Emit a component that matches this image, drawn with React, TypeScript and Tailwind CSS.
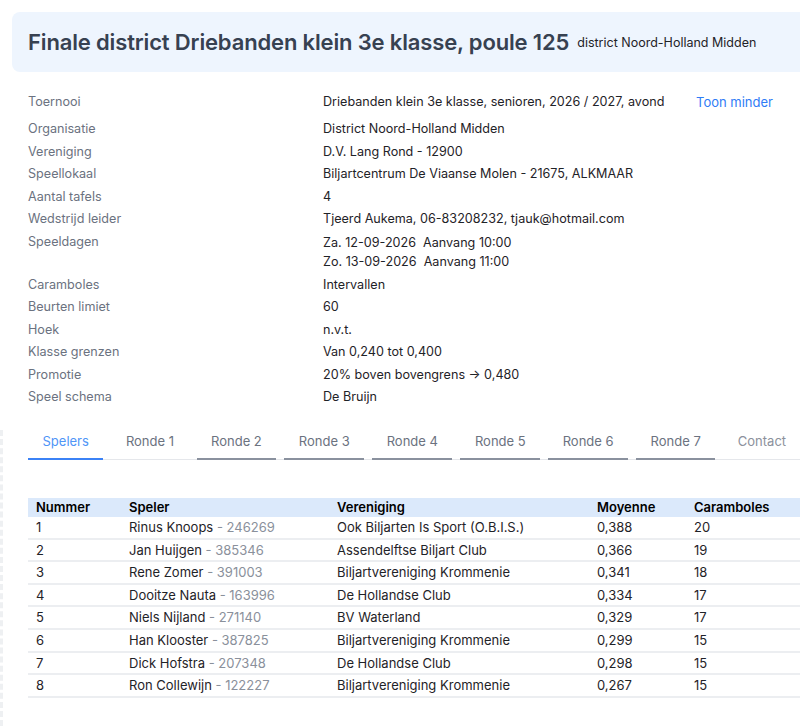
const INFO: { label: string; value: string[] }[] = [
  { label: "Organisatie", value: ["District Noord-Holland Midden"] },
  { label: "Vereniging", value: ["D.V. Lang Rond - 12900"] },
  { label: "Speellokaal", value: ["Biljartcentrum De Viaanse Molen - 21675, ALKMAAR"] },
  { label: "Aantal tafels", value: ["4"] },
  { label: "Wedstrijd leider", value: ["Tjeerd Aukema, 06-83208232, tjauk@hotmail.com"] },
  { label: "Speeldagen", value: ["Za. 12-09-2026\u00a0\u00a0Aanvang 10:00", "Zo. 13-09-2026\u00a0\u00a0Aanvang 11:00"] },
  { label: "Caramboles", value: ["Intervallen"] },
  { label: "Beurten limiet", value: ["60"] },
  { label: "Hoek", value: ["n.v.t."] },
  { label: "Klasse grenzen", value: ["Van 0,240 tot 0,400"] },
  { label: "Promotie", value: ["20% boven bovengrens \u2192 0,480"] },
  { label: "Speel schema", value: ["De Bruijn"] },
];

type Tab = { label: string; kind: "active" | "plain" | "underlined" | "muted" };

const TABS: Tab[] = [
  { label: "Spelers", kind: "active" },
  { label: "Ronde 1", kind: "plain" },
  { label: "Ronde 2", kind: "underlined" },
  { label: "Ronde 3", kind: "underlined" },
  { label: "Ronde 4", kind: "underlined" },
  { label: "Ronde 5", kind: "underlined" },
  { label: "Ronde 6", kind: "underlined" },
  { label: "Ronde 7", kind: "underlined" },
  { label: "Contact", kind: "muted" },
];

const TAB_STYLES: Record<Tab["kind"], string> = {
  active: "border-[#3b82f6] text-[#4f95f7]",
  plain: "border-transparent text-[#6b7280]",
  underlined: "border-[#8a919e] text-[#6b7280]",
  muted: "border-transparent text-[#8b919c]",
};

const PLAYERS = [
  { nr: 1, name: "Rinus Knoops", id: "246269", club: "Ook Biljarten Is Sport (O.B.I.S.)", moy: "0,388", car: 20 },
  { nr: 2, name: "Jan Huijgen", id: "385346", club: "Assendelftse Biljart Club", moy: "0,366", car: 19 },
  { nr: 3, name: "Rene Zomer", id: "391003", club: "Biljartvereniging Krommenie", moy: "0,341", car: 18 },
  { nr: 4, name: "Dooitze Nauta", id: "163996", club: "De Hollandse Club", moy: "0,334", car: 17 },
  { nr: 5, name: "Niels Nijland", id: "271140", club: "BV Waterland", moy: "0,329", car: 17 },
  { nr: 6, name: "Han Klooster", id: "387825", club: "Biljartvereniging Krommenie", moy: "0,299", car: 15 },
  { nr: 7, name: "Dick Hofstra", id: "207348", club: "De Hollandse Club", moy: "0,298", car: 15 },
  { nr: 8, name: "Ron Collewijn", id: "122227", club: "Biljartvereniging Krommenie", moy: "0,267", car: 15 },
];

export default function App() {
  return (
    <div
      className="relative h-[726px] w-[800px] overflow-hidden bg-white text-[13px] text-[#1f2328]"
      style={{ fontFamily: "Inter, 'Liberation Sans', sans-serif" }}
    >
      {/* faint dashed edge on the left */}
      <div className="absolute left-0 top-[430px] h-[296px] w-[3px] border-l-[3px] border-dashed border-[#eef0f2]" />

      <div className="pl-3 pt-3">
        <div className="flex h-[60px] w-[820px] items-center gap-2 rounded-l-lg bg-[#eef5fe] px-4">
          <h1 className="text-[22px] font-semibold tracking-[-0.15px] text-[#374151]">
            Finale district Driebanden klein 3e klasse, poule 125
          </h1>
          <span className="mt-[3px] text-[12.5px] text-[#1f2328]">district Noord-Holland Midden</span>
        </div>
      </div>

      <div className="pl-7 pt-[21px] text-[12.6px]">
        <div className="flex h-[25px] items-start">
          <div className="w-[295px] text-[#6b7280]">Toernooi</div>
          <div className="w-[373px]">Driebanden klein 3e klasse, senioren, 2026 / 2027, avond</div>
          <div className="text-[13px] text-[#2f7cf6]">Toon minder</div>
        </div>
        {INFO.map((row) => (
          <div key={row.label} className="flex">
            <div className="w-[295px] leading-[22.5px] text-[#6b7280]">{row.label}</div>
            <div className="flex flex-col">
              {row.value.map((v, i) => (
                <div
                  key={v}
                  className={
                    i > 0
                      ? "pb-[3px] leading-[19px]"
                      : row.value.length > 1
                        ? "pt-[2px] leading-[19px]"
                        : "leading-[22.5px]"
                  }
                >
                  {v}
                </div>
              ))}
            </div>
          </div>
        ))}
      </div>

      <div className="ml-7 mt-[19px] flex w-[790px] gap-2 border-b border-[#e5e7eb]">
        {TABS.map((t) => (
          <div
            key={t.label}
            className={`-mb-px border-b-2 px-[14.5px] pb-[7px] pt-[4px] ${TAB_STYLES[t.kind]}`}
          >
            {t.label}
          </div>
        ))}
      </div>

      <table className="ml-7 mt-[38px] w-[790px] border-collapse text-left">
        <thead>
          <tr className="bg-[#dbe9fb] text-black">
            <th className="w-[101px] py-0 pl-2 font-semibold leading-[19px]">Nummer</th>
            <th className="w-[208px] py-0 font-semibold leading-[19px]">Speler</th>
            <th className="w-[260px] py-0 font-semibold leading-[19px]">Vereniging</th>
            <th className="w-[97px] py-0 font-semibold leading-[19px]">Moyenne</th>
            <th className="py-0 font-semibold leading-[19px]">Caramboles</th>
          </tr>
        </thead>
        <tbody>
          {PLAYERS.map((p) => (
            <tr key={p.nr} className="border-b-2 border-[#eceef1]">
              <td className="pl-2 pt-px leading-[19.6px]">{p.nr}</td>
              <td className="pt-px leading-[19.6px]">
                {p.name} <span className="text-[#8a909b]">- {p.id}</span>
              </td>
              <td className="pt-px leading-[19.6px]">{p.club}</td>
              <td className="pt-px leading-[19.6px]">{p.moy}</td>
              <td className="pt-px leading-[19.6px]">{p.car}</td>
            </tr>
          ))}
        </tbody>
      </table>
    </div>
  );
}
